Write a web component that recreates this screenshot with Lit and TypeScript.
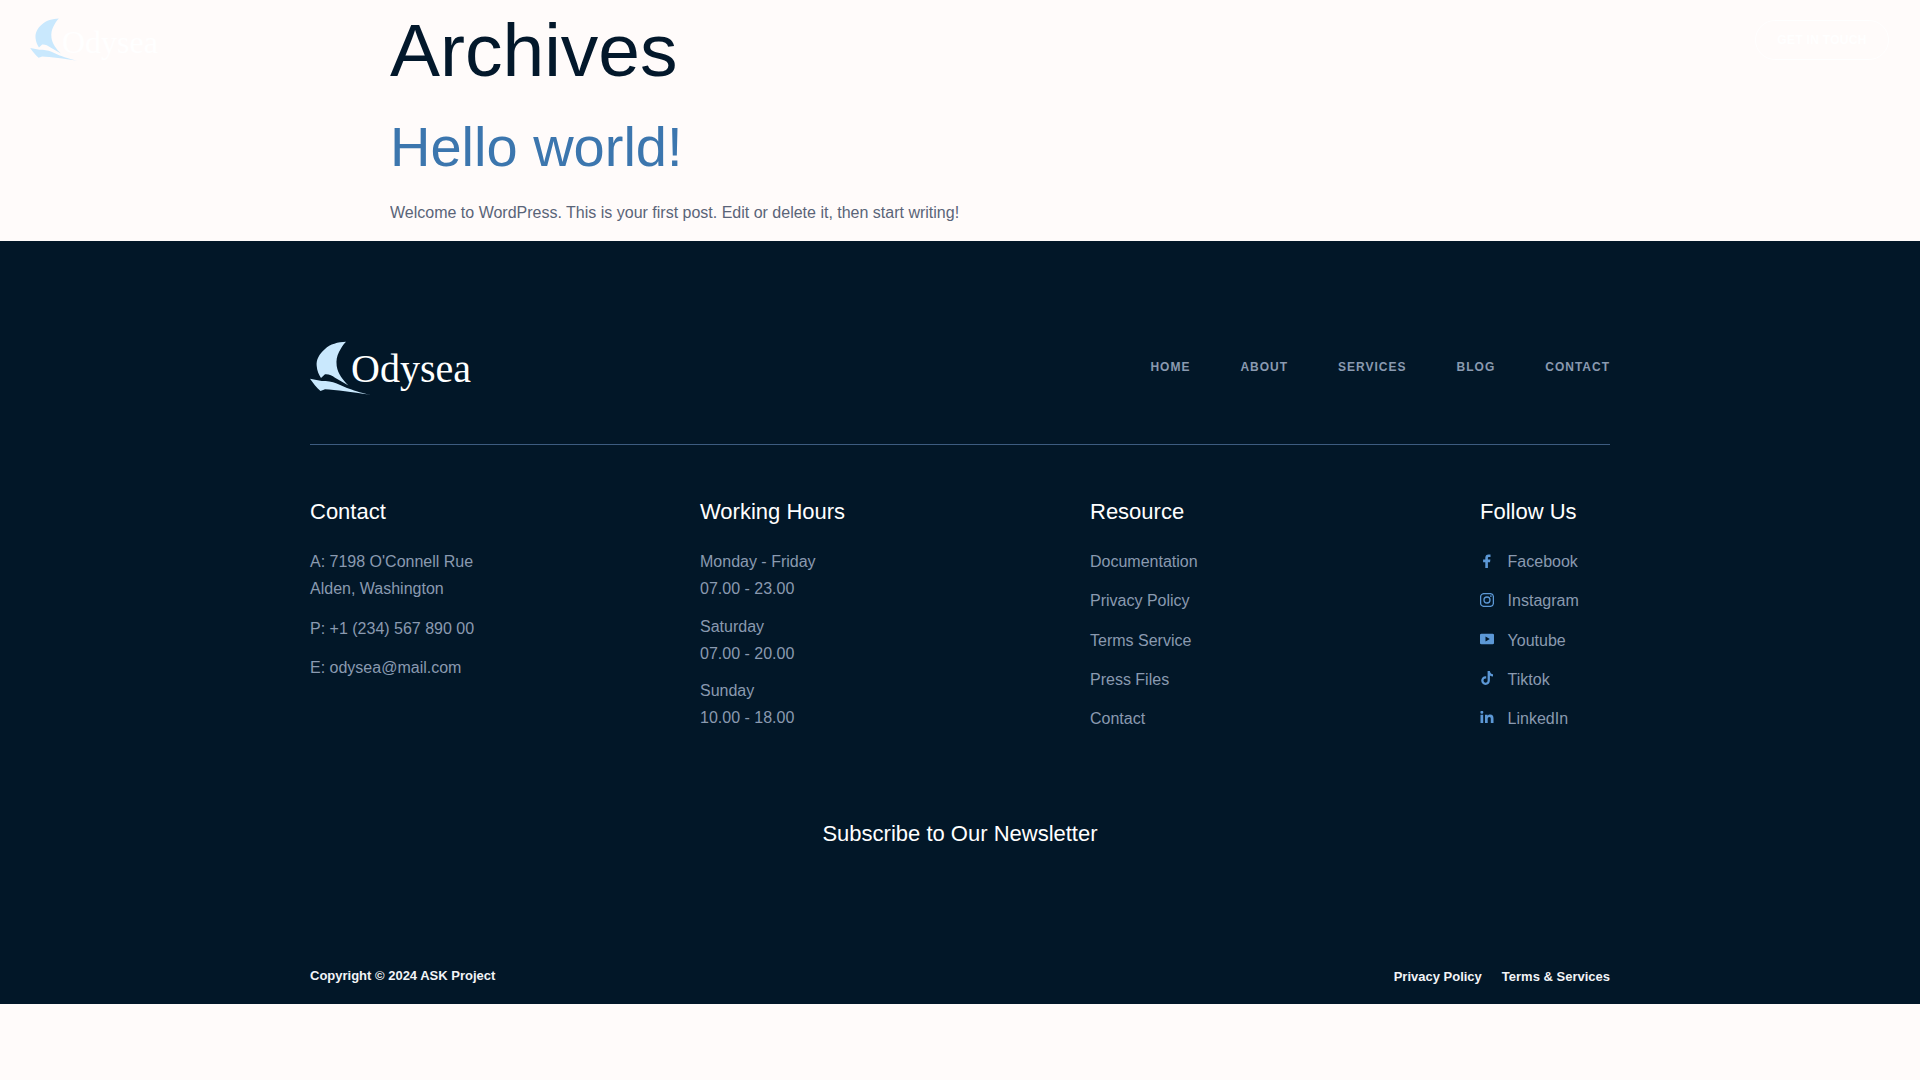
import { LitElement, html, css, svg } from "lit";
import { customElement } from "lit/decorators.js";

const logo = (textClass: string) => html`<div class="logo ${textClass}">
  <svg class="mark" viewBox="0 0 61 54" aria-hidden="true">
    <path d="M36 .7C28 1 20 3 15 8C9 13 6 19 6.700 25C7 30 9 34 11 37L15 33.300C19 33 22 34.500 25 36.700L38.500 44.500C33 39 28 33 26.700 25C26 19 27 15 29 11C31 7 33 3.500 36 .7Z" fill="#c9e8fd"/>
    <path d="M0 37.700L11.700 40C17 40 22 40.500 26.700 42.500L37 47C43 49 49 51.500 60.500 53.800C50 52.500 42 51 35 50.300C27 49.300 20 48.500 15 48.300L10.500 50C7 47 3 42 0 37.700Z" fill="#c9e8fd"/>
  </svg>
  <span class="word">Odysea</span>
</div>`;

const ico = {
  f: svg`<path d="M6.300 15.500V9.200H4.100V6.600H6.300V4.800C6.300 2.700 7.600 1.500 9.500 1.500c.9 0 1.800.1 2 .1v2.400H10.200C9.100 4 8.900 4.500 8.900 5.300v1.300h2.500L11 9.200H8.900V15.500Z" fill="currentColor"/>`,
  ig: svg`<rect x="1.600" y="1.600" width="12.800" height="12.800" rx="3.400" fill="none" stroke="currentColor" stroke-width="1.300"/><circle cx="8" cy="8" r="3" fill="none" stroke="currentColor" stroke-width="1.300"/><circle cx="11.900" cy="4.100" r=".85" fill="currentColor"/>`,
  yt: svg`<path fill-rule="evenodd" d="M2.400 2.800h11.200c1 0 1.800.8 1.900 1.800.2 2.200.2 4.600 0 6.800-.1 1-.9 1.800-1.900 1.800H2.400c-1 0-1.800-.8-1.900-1.800-.2-2.200-.2-4.600 0-6.800.1-1 .9-1.800 1.900-1.800ZM6.500 5.500v5L10.800 8Z" fill="currentColor"/>`,
  tt: svg`<path d="M8.600 1h2.300c.2 1.900 1.200 3 3.100 3.200v2.300c-1.200 0-2.200-.4-3.100-1v5.100C10.900 13.400 9 15 6.600 15 4 15 2.200 13 2.200 10.600c0-2.700 2.300-4.700 5-4.300v2.400c-1.400-.4-2.700.5-2.700 1.900 0 1.200.9 2.100 2.100 2.100 1.200 0 2-.9 2-2.200Z" fill="currentColor"/>`,
  li: svg`<path d="M1.500 4.800h2.700V13H1.500ZM2.850.8a1.500 1.500 0 1 1 0 3 1.500 1.500 0 0 1 0-3ZM6 4.800h2.600v1.100c.5-.8 1.400-1.300 2.600-1.300 2.300 0 3.300 1.400 3.300 3.800V13h-2.700V8.900c0-1.200-.4-1.900-1.400-1.900-1.100 0-1.700.8-1.700 2V13H6Z" fill="currentColor"/>`,
};

@customElement("app-root")
export class AppRoot extends LitElement {
  static styles = css`
    :host { display: block; min-height: 1080px; background: #fffbfa; font-family: "Liberation Sans", Arial, sans-serif; position: relative; }
    .top { position: absolute; top: 0; left: 0; right: 0; display: flex; justify-content: space-between; align-items: flex-start; padding: 18px 31px 0 30px; }
    .logo { display: flex; align-items: flex-start; color: #fff; }
    .logo .word { font-family: "Liberation Serif", "Times New Roman", serif; line-height: 1; }
    .logo .mark { display: block; flex: none; }
    .head-logo .mark { width: 49px; height: 43px; }
    .head-logo .word { font-size: 32px; margin-left: -17px; margin-top: 8px; }
    .foot-logo .mark { width: 61px; height: 54px; }
    .foot-logo .word { font-size: 40px; margin-left: -20px; margin-top: 8px; }
    .cta { width: 134px; height: 40px; box-sizing: border-box; border: 1px solid #fff; border-radius: 20px; color: #fff; font-size: 12px; font-weight: 700; letter-spacing: .3px; display: flex; align-items: center; justify-content: center; margin-top: 2px; }
    main { width: 1140px; margin: 0 auto; height: 241px; box-sizing: border-box; overflow: hidden; }
    h1 { margin: 0; font-size: 75px; line-height: 100px; font-weight: 400; color: #03182b; }
    h2 { margin: 0; font-size: 56px; line-height: 68px; font-weight: 400; color: #3c76ae; padding-top: 13px; }
    main p { margin: 20px 0 0; font-size: 16px; line-height: 24px; color: #5a6478; }
    footer { background: #021728; height: 763px; box-sizing: border-box; padding: 100px 310px 0; color: #8a9ab0; font-size: 16px; }
    .f-top { display: flex; justify-content: space-between; align-items: flex-start; height: 103px; border-bottom: 1px solid #3d5c80; }
    nav { display: flex; gap: 50px; font-size: 12px; font-weight: 700; letter-spacing: 1px; color: #8a9ab0; padding-top: 19px; }
    .cols { display: grid; grid-template-columns: 390px 390px 390px 130px; padding-top: 53px; }
    h3 { margin: 0 0 23px; color: #fff; font-size: 22px; font-weight: 400; line-height: 27px; }
    .line { line-height: 27px; margin-bottom: 12.500px; }
    .hours { line-height: 27px; margin-bottom: 10.500px; }
    .item { line-height: 27px; margin-bottom: 12.300px; }
    .social { display: flex; align-items: center; gap: 13.600px; color: #8a9ab0; }
    .social svg { width: 14px; height: 14px; color: #5c98d6; flex: none; margin-top: -2px; }
    .news { text-align: center; color: #fff; font-size: 22px; line-height: 28px; margin-top: 76px; }
    .bottom { display: flex; justify-content: space-between; color: #f2f4f7; font-size: 13px; font-weight: 700; margin-top: 120px; line-height: 16px; }
    .legal { display: flex; gap: 20px; font-size: 13px; padding-top: 1px; }
  `;

  render() {
    return html`
      <div class="top">
        ${logo("head-logo")}
        <div class="cta">GET IN TOUCH</div>
      </div>
      <main>
        <h1>Archives</h1>
        <h2>Hello world!</h2>
        <p>Welcome to WordPress. This is your first post. Edit or delete it, then start writing!</p>
      </main>
      <footer>
        <div class="f-top">
          ${logo("foot-logo")}
          <nav><span>HOME</span><span>ABOUT</span><span>SERVICES</span><span>BLOG</span><span>CONTACT</span></nav>
        </div>
        <div class="cols">
          <div>
            <h3>Contact</h3>
            <div class="line">A: 7198 O'Connell Rue<br />Alden, Washington</div>
            <div class="line">P: +1 (234) 567 890 00</div>
            <div class="line">E: odysea@mail.com</div>
          </div>
          <div>
            <h3>Working Hours</h3>
            <div class="hours">Monday - Friday<br />07.00 - 23.00</div>
            <div class="hours">Saturday<br />07.00 - 20.00</div>
            <div class="hours">Sunday<br />10.00 - 18.00</div>
          </div>
          <div>
            <h3>Resource</h3>
            ${["Documentation", "Privacy Policy", "Terms Service", "Press Files", "Contact"].map((t) => html`<div class="item">${t}</div>`)}
          </div>
          <div>
            <h3>Follow Us</h3>
            ${[["Facebook", ico.f], ["Instagram", ico.ig], ["Youtube", ico.yt], ["Tiktok", ico.tt], ["LinkedIn", ico.li]].map(
              ([t, i]) => html`<div class="item social"><svg viewBox="1 1 14 14" aria-hidden="true">${i}</svg><span>${t}</span></div>`
            )}
          </div>
        </div>
        <div class="news">Subscribe to Our Newsletter</div>
        <div class="bottom">
          <span>Copyright © 2024 ASK Project</span>
          <div class="legal"><span>Privacy Policy</span><span>Terms &amp; Services</span></div>
        </div>
      </footer>
    `;
  }
}
